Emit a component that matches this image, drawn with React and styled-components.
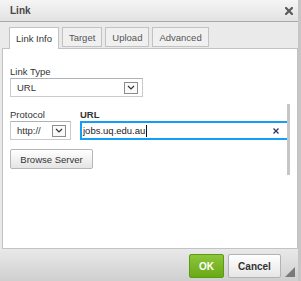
import React from 'react'
import styled, { createGlobalStyle } from 'styled-components'

const GlobalStyle = createGlobalStyle`
  html, body {
    margin: 0;
    padding: 0;
    background: #fff;
  }
  body {
    font-family: "Liberation Sans", Arial, sans-serif;
    font-size: 9.5px;
    color: #333;
  }
`;

const tabs = ['Link Info', 'Target', 'Upload', 'Advanced'];

export default function App() {
    return (
        <Frame>
            <GlobalStyle />
            <Dialog>
                <TitleBar>
                    <Title>Link</Title>
                    <CloseIcon width="8" height="8" viewBox="0 0 8 8">
                        <path d="M1 1 L7 7 M7 1 L1 7" stroke="#5a5a5a" strokeWidth="2.2" strokeLinecap="square" />
                    </CloseIcon>
                </TitleBar>
                <TabBar>
                    {tabs.map((t, i) => (
                        <Tab key={t} $active={i === 0}>{t}</Tab>
                    ))}
                </TabBar>
                <Content>
                    <Field>
                        <Label>Link Type</Label>
                        <Select $width={133}>
                            <span>URL</span>
                            <Arrow />
                        </Select>
                    </Field>
                    <Row>
                        <Field>
                            <Label>Protocol</Label>
                            <Select $width={61}>
                                <span>http://</span>
                                <Arrow />
                            </Select>
                        </Field>
                        <Field>
                            <Label $bold>URL</Label>
                            <Input>
                                <InputText>jobs.uq.edu.au<Caret /></InputText>
                                <svg width="6" height="6" viewBox="0 0 6 6">
                                    <path d="M0.5 0.5 L5.5 5.5 M5.5 0.5 L0.5 5.5" stroke="#2b3566" strokeWidth="1.3" />
                                </svg>
                            </Input>
                        </Field>
                    </Row>
                    <Button>Browse Server</Button>
                    <Thumb />
                </Content>
                <Footer>
                    <OkButton>OK</OkButton>
                    <CancelButton>Cancel</CancelButton>
                    <Grip />
                </Footer>
            </Dialog>
        </Frame>
    )
}

function Arrow() {
    return (
        <ArrowBox>
            <svg width="8" height="5" viewBox="0 0 8 5">
                <path d="M1 1 L4 4 L7 1" fill="none" stroke="#333" strokeWidth="1.2" />
            </svg>
        </ArrowBox>
    )
}

const Frame = styled.div`
    width: 301px;
    height: 281px;
    overflow: hidden;
    display: flex;
    background: #c6c6c6;
`;

const Dialog = styled.div`
    width: 298px;
    height: 281px;
    display: flex;
    flex-direction: column;
    background: #e9e9e9;
`;

const TitleBar = styled.div`
    height: 21px;
    flex: none;
    display: flex;
    align-items: center;
    justify-content: space-between;
    padding: 0 5px 0 10px;
    background: linear-gradient(#f5f5f5, #e2e2e2);
    border-bottom: 1px solid #a9a9a9;
`;

const Title = styled.div`
    font-weight: bold;
    font-size: 10px;
    color: #474747;
`;

const CloseIcon = styled.svg`
    display: block;
`;

const TabBar = styled.div`
    height: 26px;
    flex: none;
    display: flex;
    align-items: flex-end;
    gap: 3px;
    padding-left: 9px;
    background: #eaeaea;
    position: relative;
    z-index: 1;
`;

const Tab = styled.div`
    height: ${p => p.$active ? '21px' : '18px'};
    margin-bottom: ${p => p.$active ? '-1px' : '1px'};
    padding: 0 6px;
    display: flex;
    align-items: center;
    border: 1px solid #c2c2c2;
    border-bottom: ${p => p.$active ? 'none' : '1px solid #c2c2c2'};
    background: ${p => p.$active ? '#fff' : '#f0f0f0'};
    color: ${p => p.$active ? '#333' : '#555'};
`;

const Content = styled.div`
    height: 199px;
    flex: none;
    margin-left: 2px;
    position: relative;
    background: #fff;
    border: 1px solid #c3c3c3;
    padding: 17px 0 0 7px;
    box-sizing: border-box;
    height: 201px;
`;

const Field = styled.div`
    display: flex;
    flex-direction: column;
`;

const Label = styled.div`
    line-height: 11px;
    margin-bottom: 1px;
    color: #333;
    font-weight: ${p => p.$bold ? 'bold' : 'normal'};
`;

const Select = styled.div`
    width: ${p => p.$width}px;
    height: 19px;
    box-sizing: border-box;
    display: flex;
    align-items: center;
    justify-content: space-between;
    padding: 0 4px 0 6px;
    border: 1px solid #c9cccf;
    border-top-color: #aeb3b9;
    background: #fff;
    color: #333;
`;

const ArrowBox = styled.div`
    width: 14px;
    height: 12px;
    box-sizing: border-box;
    border: 1px solid #8c8c8c;
    display: flex;
    align-items: center;
    justify-content: center;
    background: #fafafa;
`;

const Row = styled.div`
    display: flex;
    gap: 9px;
    margin-top: 12px;
`;

const Input = styled.div`
    width: 209px;
    height: 19px;
    box-sizing: border-box;
    border: 1px solid #139ff7;
    box-shadow: inset 0 0 0 1px #139ff7;
    display: flex;
    align-items: center;
    justify-content: space-between;
    padding: 0 9px 0 2px;
    background: #fff;
`;

const InputText = styled.span`
    display: flex;
    align-items: center;
    color: #222;
`;

const Caret = styled.span`
    width: 1px;
    height: 12px;
    background: #111;
    margin-left: 1px;
`;

const Button = styled.div`
    margin-top: 9px;
    width: 83px;
    height: 20px;
    box-sizing: border-box;
    display: flex;
    align-items: center;
    justify-content: center;
    border: 1px solid #b6b6b6;
    border-radius: 2px;
    background: linear-gradient(#fff, #e4e4e4);
    color: #333;
`;

const Thumb = styled.div`
    position: absolute;
    left: 284px;
    top: 55px;
    width: 3px;
    height: 71px;
    background: #c6c6c6;
`;

const Footer = styled.div`
    flex: 1;
    position: relative;
    display: flex;
    justify-content: flex-end;
    align-items: flex-start;
    gap: 4px;
    padding: 5px 17px 0 0;
    background: linear-gradient(#e9e9e9, #cfcfcf);
`;

const OkButton = styled.div`
    width: 35px;
    height: 24px;
    box-sizing: border-box;
    display: flex;
    align-items: center;
    justify-content: center;
    border: 1px solid #5d9a12;
    border-radius: 2px;
    background: linear-gradient(#8cc63c, #69a915);
    color: #fff;
    font-weight: bold;
    font-size: 10px;
`;

const CancelButton = styled.div`
    width: 53px;
    height: 24px;
    box-sizing: border-box;
    display: flex;
    align-items: center;
    justify-content: center;
    border: 1px solid #b3b3b3;
    border-radius: 2px;
    background: linear-gradient(#fff, #e6e6e6);
    color: #333;
    font-weight: bold;
    font-size: 10px;
`;

const Grip = styled.div`
    position: absolute;
    right: 3px;
    top: 18px;
    width: 0;
    height: 0;
    border-style: solid;
    border-width: 0 0 10px 10px;
    border-color: transparent transparent #7a7a7a transparent;
`;
